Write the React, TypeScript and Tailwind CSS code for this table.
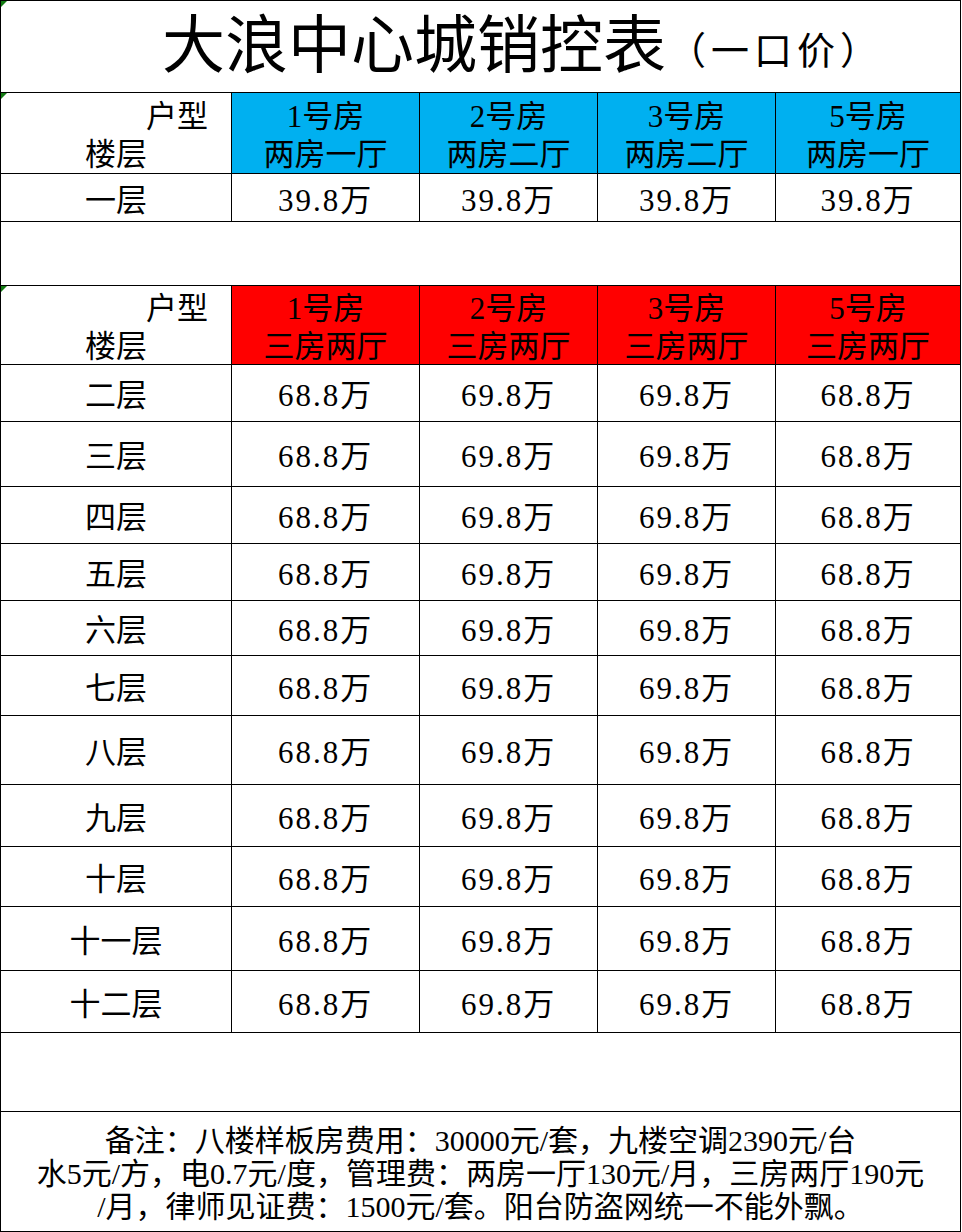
import React from 'react';

type Row = { label: string; h: string; prices: string[] };

const cols = 'grid grid-cols-[231px_188px_178px_178px_184px]';

const floors: Row[] = [
  { label: '二层', h: 'h-[57px]', prices: ['68.8万', '69.8万', '69.8万', '68.8万'] },
  { label: '三层', h: 'h-[65px]', prices: ['68.8万', '69.8万', '69.8万', '68.8万'] },
  { label: '四层', h: 'h-[57px]', prices: ['68.8万', '69.8万', '69.8万', '68.8万'] },
  { label: '五层', h: 'h-[57px]', prices: ['68.8万', '69.8万', '69.8万', '68.8万'] },
  { label: '六层', h: 'h-[55px]', prices: ['68.8万', '69.8万', '69.8万', '68.8万'] },
  { label: '七层', h: 'h-[60px]', prices: ['68.8万', '69.8万', '69.8万', '68.8万'] },
  { label: '八层', h: 'h-[69px]', prices: ['68.8万', '69.8万', '69.8万', '68.8万'] },
  { label: '九层', h: 'h-[62px]', prices: ['68.8万', '69.8万', '69.8万', '68.8万'] },
  { label: '十层', h: 'h-[60px]', prices: ['68.8万', '69.8万', '69.8万', '68.8万'] },
  { label: '十一层', h: 'h-[64px]', prices: ['68.8万', '69.8万', '69.8万', '68.8万'] },
  { label: '十二层', h: 'h-[62px]', prices: ['68.8万', '69.8万', '69.8万', '68.8万'] },
];

const Marker = () => (
  <div className="absolute top-0 left-0 w-0 h-0 border-t-[6px] border-r-[6px] border-t-[#127a12] border-r-transparent" />
);

const HeaderRow = ({ h, bg, units }: { h: string; bg: string; units: string[][] }) => (
  <div className={`${cols} ${h} border-b border-black overflow-hidden`}>
    <div className="relative border-r border-black flex flex-col justify-center pl-[84px] text-[31px] leading-[38px]">
      <Marker />
      <div className="flex flex-col translate-y-[3px]">
        <span className="pl-[61px]">户型</span>
        <span>楼层</span>
      </div>
    </div>
    {units.map((u, i) => (
      <div
        key={i}
        className={`${bg} ${i < 3 ? 'border-r border-black' : ''} flex flex-col items-center justify-center text-[31px] leading-[38px]`}
      >
        <div className="flex flex-col items-center translate-y-[3px]">
          <span>{u[0]}</span>
          <span>{u[1]}</span>
        </div>
      </div>
    ))}
  </div>
);

const DataRow = ({ r }: { r: Row }) => (
  <div className={`${cols} ${r.h} border-b border-black text-[31px] leading-[36px]`}>
    <div className="border-r border-black flex items-center justify-center pt-[6px]">{r.label}</div>
    {r.prices.map((p, i) => (
      <div
        key={i}
        className={`${i < 3 ? 'border-r border-black' : ''} flex items-center justify-center pt-[6px] tracking-[2px]`}
      >
        {p}
      </div>
    ))}
  </div>
);

export default function App() {
  return (
    <div className="w-[962px] h-[1232px] bg-white text-black font-['Liberation_Serif','Noto_Sans_CJK_SC',serif]">
      <div className="w-[961px] border border-black">
        {/* title */}
        <div className="relative h-[92px] border-b border-black flex items-center pl-[161px]">
          <Marker />
          <span className="text-[63px] leading-none">大浪中心城销控表</span>
          <span className="text-[38px] leading-none mt-[8px] ml-[2px] tracking-[5px]">（一口价）</span>
        </div>

        <HeaderRow
          h="h-[81px]"
          bg="bg-[#00b0f0]"
          units={[
            ['1号房', '两房一厅'],
            ['2号房', '两房二厅'],
            ['3号房', '两房二厅'],
            ['5号房', '两房一厅'],
          ]}
        />
        <DataRow r={{ label: '一层', h: 'h-[48px]', prices: ['39.8万', '39.8万', '39.8万', '39.8万'] }} />

        <div className="h-[64px] border-b border-black" />

        <HeaderRow
          h="h-[79px]"
          bg="bg-[#ff0000]"
          units={[
            ['1号房', '三房两厅'],
            ['2号房', '三房两厅'],
            ['3号房', '三房两厅'],
            ['5号房', '三房两厅'],
          ]}
        />
        {floors.map((r) => (
          <DataRow key={r.label} r={r} />
        ))}

        <div className="h-[79px] border-b border-black" />

        {/* notes */}
        <div className="h-[119px] flex flex-col items-center justify-center text-[30px] leading-[33px] whitespace-nowrap pt-[3px]">
          <span>备注：八楼样板房费用：30000元/套，九楼空调2390元/台</span>
          <span>水5元/方，电0.7元/度，管理费：两房一厅130元/月，三房两厅190元</span>
          <span>/月，律师见证费：1500元/套。阳台防盗网统一不能外飘。</span>
        </div>
      </div>
    </div>
  );
}
